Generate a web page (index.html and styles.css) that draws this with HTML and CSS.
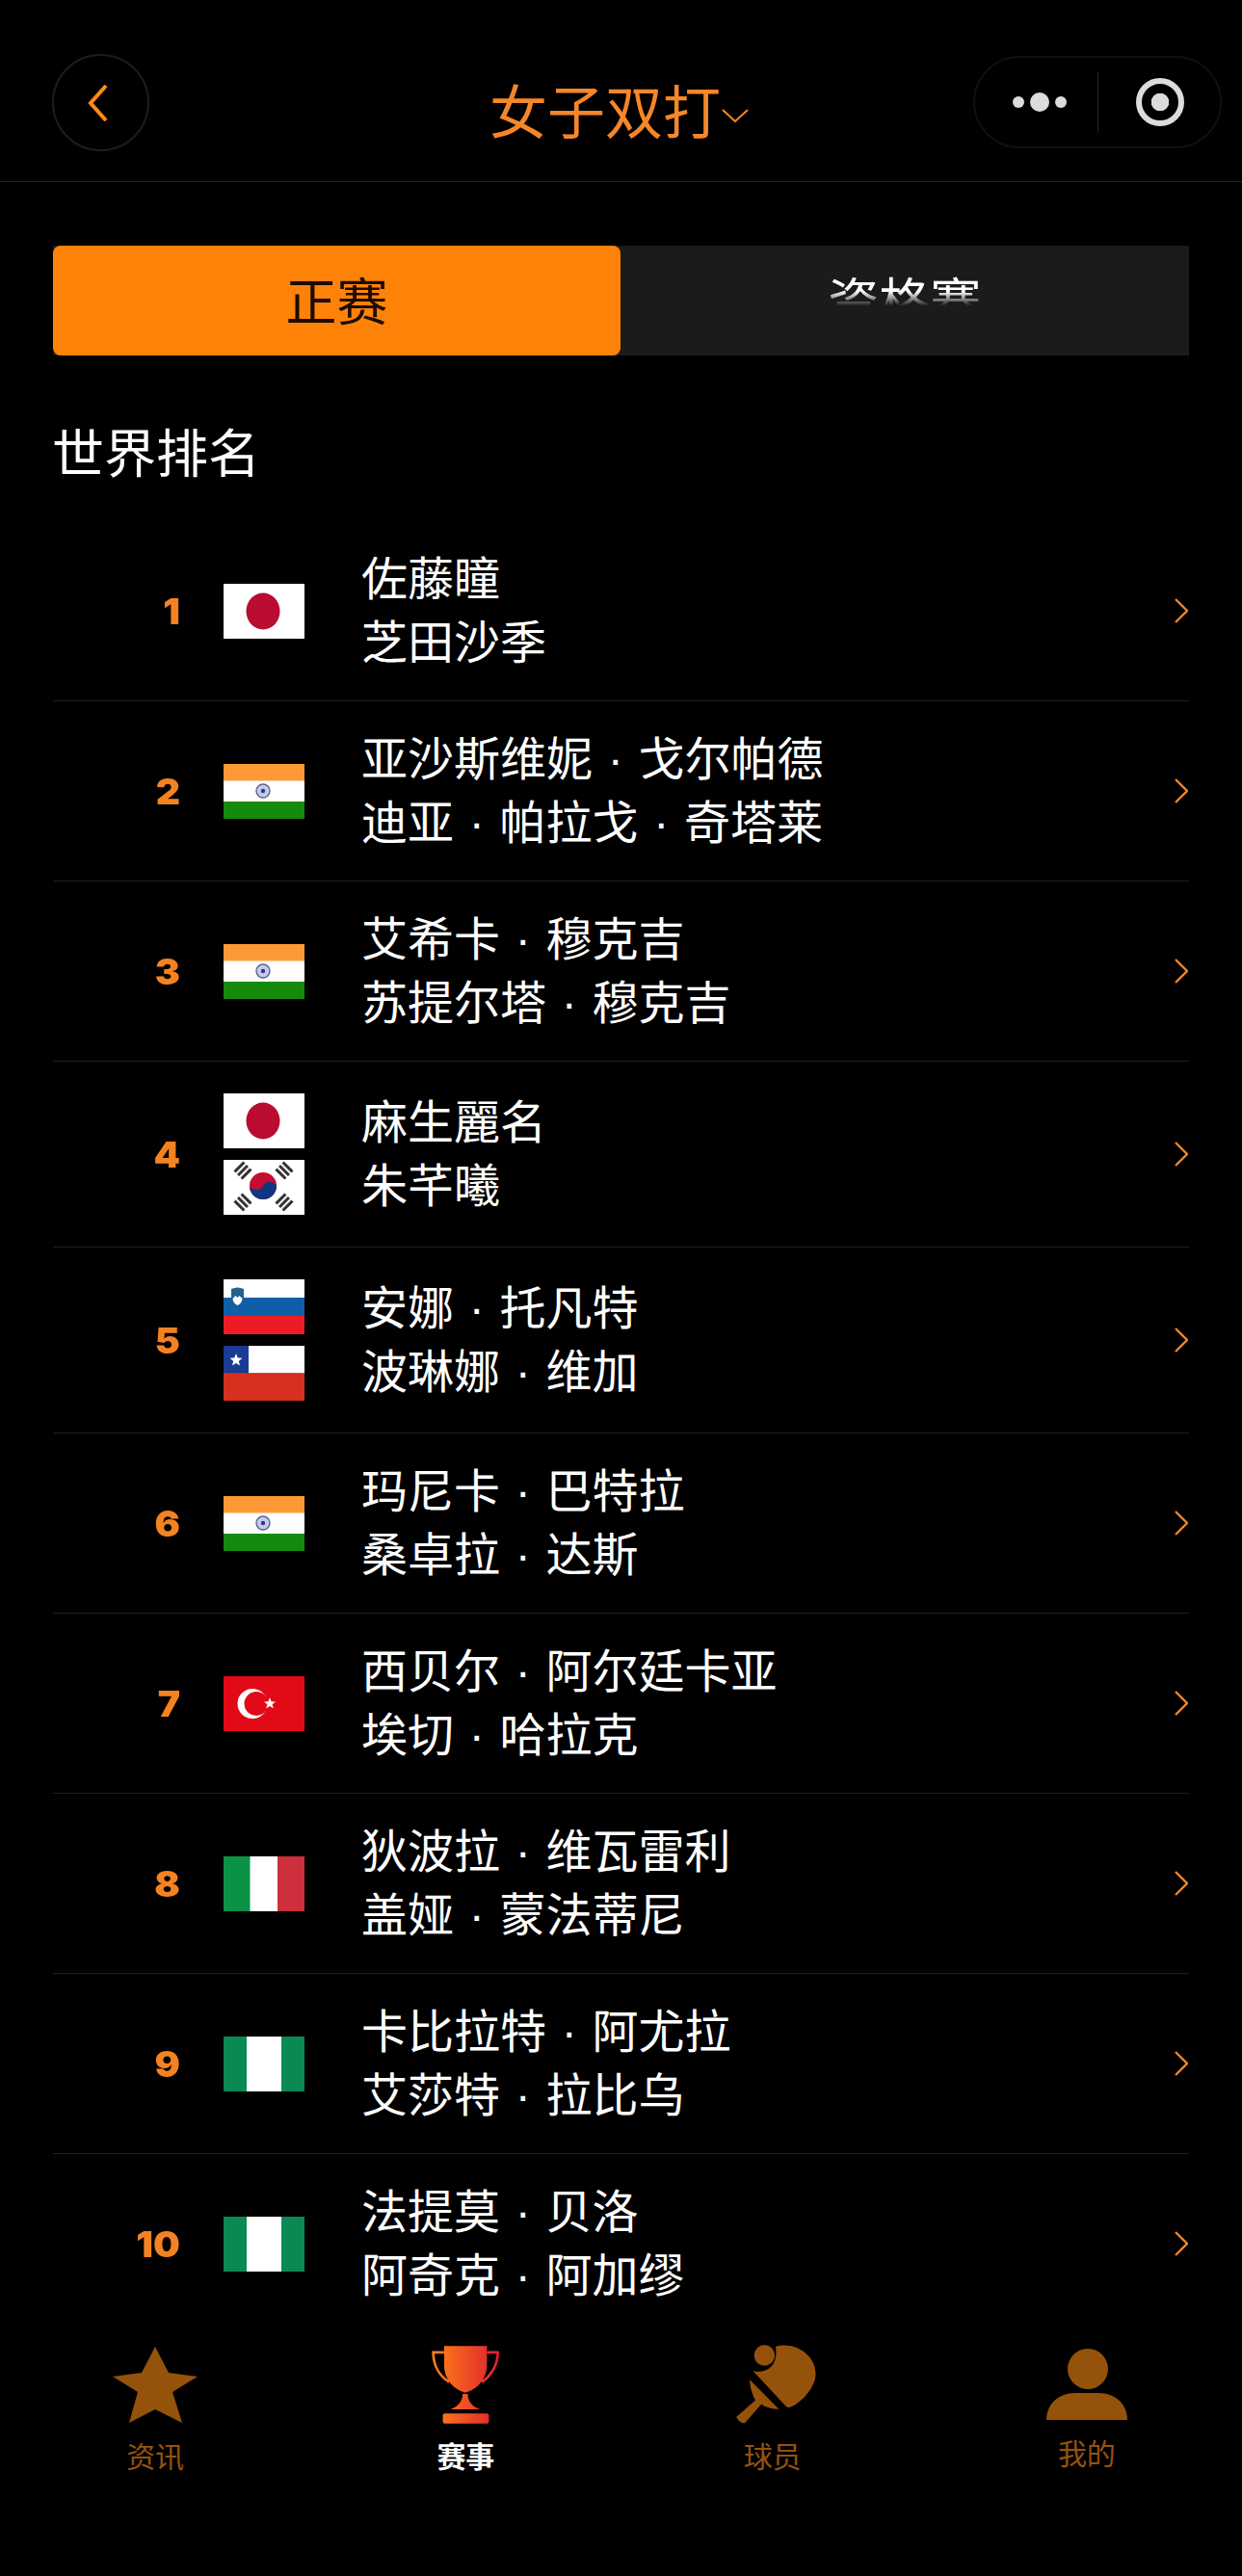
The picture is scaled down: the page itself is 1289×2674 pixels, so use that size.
FILE: index.html
```html
<!DOCTYPE html>
<html lang="zh-CN">
<head>
  <meta charset="UTF-8">
  <meta name="viewport" content="width=device-width, initial-scale=1.0">
  <title>女子双打</title>
  <link rel="stylesheet" href="styles.css">
</head>
<body>
  <svg class="sprite">
    <symbol id="flag-jp" viewBox="0 0 84 57">
      <rect width="84" height="57" fill="#fff"/>
      <ellipse cx="41" cy="28.5" rx="17.5" ry="19" fill="#b90c30"/>
    </symbol>
    <symbol id="flag-in" viewBox="0 0 84 57">
      <rect width="84" height="57" fill="#fff"/>
      <rect width="84" height="17.5" fill="#fd9a36"/>
      <rect y="39" width="84" height="18" fill="#168a0c"/>
      <circle cx="41" cy="28" r="7" fill="#c5cbe6" stroke="#5a648f" stroke-width="1.4"/>
      <circle cx="41" cy="28" r="2.2" fill="#2b3a92"/>
    </symbol>
    <symbol id="flag-kr" viewBox="0 0 84 57">
      <rect width="84" height="57" fill="#fff"/>
      <circle cx="41" cy="27" r="14" fill="#c60c30"/>
      <path d="M27 27a14 14 0 0 0 28 0a7 4 0 0 0-14 0a7 4 0 0 1-14 0z" fill="#10367f"/>
      <g fill="none" stroke="#333" stroke-width="3">
        <path transform="translate(20 11) rotate(-45)" d="M-7-5H7M-7 0H7M-7 5H7"/>
        <path transform="translate(63 11) rotate(45)" d="M-7-5H7M-7 0H7M-7 5H7"/>
        <path transform="translate(20 44) rotate(45)" d="M-7-5H7M-7 0H7M-7 5H7"/>
        <path transform="translate(63 44) rotate(-45)" d="M-7-5H7M-7 0H7M-7 5H7"/>
      </g>
    </symbol>
    <symbol id="flag-si" viewBox="0 0 84 57">
      <rect width="84" height="57" fill="#fff"/>
      <rect y="19" width="84" height="19" fill="#0f5fa8"/>
      <rect y="38" width="84" height="19" fill="#ed1c24"/>
      <path d="M8 10q6.500-3 13 0v9q0 6-6.500 9q-6.500-3-6.500-9z" fill="#23618f"/>
      <path d="M9.500 20l3-3 2 2 2-2 3 3q-0.500 5-5 7q-4.500-2-5-7z" fill="#fff"/>
    </symbol>
    <symbol id="flag-cl" viewBox="0 0 84 57">
      <rect width="84" height="28.500" fill="#fff"/>
      <rect y="28.500" width="84" height="28.500" fill="#d8301f"/>
      <rect width="26" height="28.500" fill="#1a3a94"/>
      <polygon points="13,8 14.800,12.500 19.500,12.800 15.800,15.900 17,20.500 13,18 9,20.500 10.200,15.900 6.500,12.800 11.200,12.500" fill="#fff"/>
    </symbol>
    <symbol id="flag-tr" viewBox="0 0 84 57">
      <rect width="84" height="57" fill="#e30a17"/>
      <circle cx="30" cy="28.500" r="15.500" fill="#fff"/>
      <circle cx="34" cy="28.500" r="12.500" fill="#e30a17"/>
      <polygon points="48,22 49.600,26.300 54,26.500 50.500,29.200 51.800,33.500 48,31 44.200,33.500 45.500,29.200 42,26.500 46.400,26.300" fill="#fff"/>
    </symbol>
    <symbol id="flag-it" viewBox="0 0 84 57">
      <rect width="84" height="57" fill="#fff"/>
      <rect width="27.500" height="57" fill="#0b9247"/>
      <rect x="56" width="28" height="57" fill="#cd2f3d"/>
    </symbol>
    <symbol id="flag-ng" viewBox="0 0 84 57">
      <rect width="84" height="57" fill="#0a8a52"/>
      <rect x="24" width="36" height="57" fill="#fff"/>
    </symbol>
    <symbol id="arrow" viewBox="0 0 14 26">
      <path d="M1 1l12 12L1 25" fill="none" stroke="#f0872a" stroke-width="2.400"/>
    </symbol>
  </svg>

  <header class="topbar">
    <div class="back-btn">
      <svg width="22" height="38" viewBox="0 0 22 38"><path d="M19 1L3 19l16 18" fill="none" stroke="#ff8c14" stroke-width="4"/></svg>
    </div>
    <div class="title">
      <span>女子双打</span>
      <svg class="title-arrow" width="28" height="14" viewBox="0 0 28 14"><path d="M1 1l13 12L27 1" fill="none" stroke="#f0872a" stroke-width="2"/></svg>
    </div>
    <div class="capsule">
      <div class="dots"><i></i><i class="big"></i><i></i></div>
      <div class="capsule-line"></div>
      <div class="ring"></div>
    </div>
  </header>

  <main class="content">
    <div class="tabs">
      <div class="tab tab-active">正赛</div>
      <div class="tab"><span class="tab-fade">资格赛</span></div>
    </div>

    <h2 class="section-title">世界排名</h2>

    <div class="rank-list">
      <div class="rank-row">
        <div class="rank-num">1</div>
        <div class="flags"><svg class="flag"><use href="#flag-jp"/></svg></div>
        <div class="names"><p>佐藤瞳</p><p>芝田沙季</p></div>
        <svg class="row-arrow"><use href="#arrow"/></svg>
      </div>
      <div class="rank-row">
        <div class="rank-num">2</div>
        <div class="flags"><svg class="flag"><use href="#flag-in"/></svg></div>
        <div class="names"><p>亚沙斯维妮 <span class="dot">·</span> 戈尔帕德</p><p>迪亚 <span class="dot">·</span> 帕拉戈 <span class="dot">·</span> 奇塔莱</p></div>
        <svg class="row-arrow"><use href="#arrow"/></svg>
      </div>
      <div class="rank-row">
        <div class="rank-num">3</div>
        <div class="flags"><svg class="flag"><use href="#flag-in"/></svg></div>
        <div class="names"><p>艾希卡 <span class="dot">·</span> 穆克吉</p><p>苏提尔塔 <span class="dot">·</span> 穆克吉</p></div>
        <svg class="row-arrow"><use href="#arrow"/></svg>
      </div>
      <div class="rank-row">
        <div class="rank-num">4</div>
        <div class="flags"><svg class="flag"><use href="#flag-jp"/></svg><svg class="flag"><use href="#flag-kr"/></svg></div>
        <div class="names"><p>麻生麗名</p><p>朱芊曦</p></div>
        <svg class="row-arrow"><use href="#arrow"/></svg>
      </div>
      <div class="rank-row">
        <div class="rank-num">5</div>
        <div class="flags"><svg class="flag"><use href="#flag-si"/></svg><svg class="flag"><use href="#flag-cl"/></svg></div>
        <div class="names"><p>安娜 <span class="dot">·</span> 托凡特</p><p>波琳娜 <span class="dot">·</span> 维加</p></div>
        <svg class="row-arrow"><use href="#arrow"/></svg>
      </div>
      <div class="rank-row">
        <div class="rank-num">6</div>
        <div class="flags"><svg class="flag"><use href="#flag-in"/></svg></div>
        <div class="names"><p>玛尼卡 <span class="dot">·</span> 巴特拉</p><p>桑卓拉 <span class="dot">·</span> 达斯</p></div>
        <svg class="row-arrow"><use href="#arrow"/></svg>
      </div>
      <div class="rank-row">
        <div class="rank-num">7</div>
        <div class="flags"><svg class="flag"><use href="#flag-tr"/></svg></div>
        <div class="names"><p>西贝尔 <span class="dot">·</span> 阿尔廷卡亚</p><p>埃切 <span class="dot">·</span> 哈拉克</p></div>
        <svg class="row-arrow"><use href="#arrow"/></svg>
      </div>
      <div class="rank-row">
        <div class="rank-num">8</div>
        <div class="flags"><svg class="flag"><use href="#flag-it"/></svg></div>
        <div class="names"><p>狄波拉 <span class="dot">·</span> 维瓦雷利</p><p>盖娅 <span class="dot">·</span> 蒙法蒂尼</p></div>
        <svg class="row-arrow"><use href="#arrow"/></svg>
      </div>
      <div class="rank-row">
        <div class="rank-num">9</div>
        <div class="flags"><svg class="flag"><use href="#flag-ng"/></svg></div>
        <div class="names"><p>卡比拉特 <span class="dot">·</span> 阿尤拉</p><p>艾莎特 <span class="dot">·</span> 拉比乌</p></div>
        <svg class="row-arrow"><use href="#arrow"/></svg>
      </div>
      <div class="rank-row">
        <div class="rank-num">10</div>
        <div class="flags"><svg class="flag"><use href="#flag-ng"/></svg></div>
        <div class="names"><p>法提莫 <span class="dot">·</span> 贝洛</p><p>阿奇克 <span class="dot">·</span> 阿加缪</p></div>
        <svg class="row-arrow"><use href="#arrow"/></svg>
      </div>
    </div>
  </main>

  <nav class="tabbar">
    <div class="nav-item">
      <div class="nav-icon">
        <svg width="88" height="79" viewBox="0 0 88 79"><polygon points="44,0 58,27 88,31 62,47 72,79 44,65 17,79 26,47 0,31 30,27" fill="#95520a"/></svg>
      </div>
      <span>资讯</span>
    </div>
    <div class="nav-item nav-active">
      <div class="nav-icon">
        <svg width="73" height="84" viewBox="50 36 220 252">
          <defs>
            <linearGradient id="cup" gradientUnits="userSpaceOnUse" x1="60" y1="0" x2="260" y2="0">
              <stop offset="0" stop-color="#ff8018"/>
              <stop offset="1" stop-color="#e0202f"/>
            </linearGradient>
          </defs>
          <path d="M92 42H226V100C226 150 190 180 158 188C126 180 92 150 92 100Z" fill="url(#cup)"/>
          <path d="M92 62H58C58 100 75 135 108 155M226 62H260C260 100 240 135 210 155" fill="none" stroke="url(#cup)" stroke-width="8"/>
          <path d="M150 192H166C166 215 180 232 205 240H112C135 232 150 215 150 192Z" fill="url(#cup)"/>
          <rect x="88" y="253" width="144" height="32" rx="6" fill="url(#cup)"/>
        </svg>
      </div>
      <span>赛事</span>
    </div>
    <div class="nav-item nav-player">
      <div class="nav-icon">
        <svg width="90" height="88" viewBox="60 30 270 265" fill="#95520a">
          <circle cx="160" cy="72" r="32"/>
          <path d="M195 44C255 28 320 70 320 130C320 175 270 225 238 235C232 235 228 232 224 228L124 120C165 132 205 105 195 44Z"/>
          <path d="M114 148L205 240C185 240 165 235 150 225L100 282C92 288 80 280 72 265L132 212C122 195 114 170 114 148Z"/>
        </svg>
      </div>
      <span>球员</span>
    </div>
    <div class="nav-item nav-mine">
      <div class="nav-icon">
        <svg width="84" height="74" viewBox="0 0 84 74" fill="#95520a">
          <ellipse cx="43" cy="21" rx="21" ry="21"/>
          <path d="M0 74C0 58 12 46 30 46H54C72 46 84 58 84 74Z"/>
        </svg>
      </div>
      <span>我的</span>
    </div>
  </nav>
</body>
</html>
```

FILE: styles.css
```css
* {
  box-sizing: border-box;
}

body {
  margin: 0;
  width: 1289px;
  height: 2674px;
  display: flex;
  flex-direction: column;
  overflow: hidden;
  background-color: #000;
  color: #fff;
  font-family: "Noto Sans CJK SC", "Noto Sans", sans-serif;
}

.sprite {
  display: none;
}

/* top bar */
.topbar {
  flex: none;
  height: 189px;
  padding: 0 21px 24px 54px;
  display: flex;
  align-items: flex-end;
  justify-content: space-between;
  border-bottom: 1px solid #232323;
}

.back-btn {
  width: 101px;
  height: 101px;
  margin-bottom: 7px;
  display: flex;
  align-items: center;
  justify-content: center;
  padding-right: 6px;
  border: 2px solid #1d1d1d;
  border-radius: 50%;
}

.title {
  display: flex;
  align-items: center;
  margin-right: -120px;
  margin-bottom: -3px;
  height: 108px;
  font-size: 60px;
  line-height: 108px;
  color: #f5862a;
}

.title-arrow {
  margin: 14px 0 0 1px;
}

.capsule {
  width: 258px;
  height: 96px;
  margin-bottom: 10px;
  display: flex;
  align-items: center;
  border: 2px solid #101010;
  border-radius: 48px;
}

.dots {
  width: 127px;
  display: flex;
  align-items: center;
  justify-content: center;
  gap: 6px;
  padding-left: 6px;
}

.dots i {
  width: 12px;
  height: 12px;
  border-radius: 50%;
  background-color: #dcdcdc;
}

.dots i.big {
  width: 20px;
  height: 20px;
}

.capsule-line {
  width: 1px;
  height: 64px;
  background-color: #242424;
}

.ring {
  width: 50px;
  height: 50px;
  margin-left: 39px;
  border: 6px solid #dcdcdc;
  border-radius: 50%;
  background: radial-gradient(circle, #dcdcdc 9px, transparent 9.500px);
}

/* content */
.content {
  flex: 1;
  min-height: 0;
  overflow: hidden;
  padding: 66px 55px 0;
}

.tabs {
  height: 114px;
  display: flex;
  background-color: #1b1b1b;
}

.tab {
  width: 50%;
  display: flex;
  align-items: center;
  justify-content: center;
  padding-bottom: 4px;
  font-size: 53px;
}

.tab-active {
  width: 589px;
  background-color: #ff8208;
  border-radius: 8px;
  color: #1c0b00;
}

.tab-fade {
  -webkit-mask-image: linear-gradient(to bottom, #000 40%, transparent 60%);
  mask-image: linear-gradient(to bottom, #000 40%, transparent 60%);
}

.section-title {
  margin: 63px 0 37px -1px;
  font-size: 54px;
  font-weight: 400;
  line-height: 72px;
}

.rank-row {
  min-height: 187px;
  display: flex;
  align-items: center;
  border-bottom: 1px solid #202020;
}

.rank-num {
  width: 132px;
  flex: none;
  text-align: right;
  font-family: Inter, "Liberation Sans", sans-serif;
  font-weight: 900;
  font-size: 37px;
  color: #f58220;
  transform: scaleX(1.06);
  transform-origin: right center;
}

.flags {
  flex: none;
  width: 84px;
  margin: 33px 59px 33px 45px;
  display: flex;
  flex-direction: column;
  gap: 12px;
}

.flag {
  display: block;
  width: 84px;
  height: 57px;
}

.names {
  flex: 1;
  padding-bottom: 8px;
  font-size: 48px;
  line-height: 66px;
  word-spacing: -11px;
}

.names p {
  margin: 0;
}

.dot {
  display: inline-block;
  width: 48px;
  line-height: 1;
  text-align: center;
  font-family: "Liberation Sans", sans-serif;
}

.row-arrow {
  flex: none;
  width: 14px;
  height: 26px;
  margin-right: 1px;
}

/* bottom tabs */
.tabbar {
  flex: none;
  height: 264px;
  padding-top: 23px;
  display: grid;
  grid-template-columns: repeat(4, 1fr);
  background-color: #000;
}

.nav-item {
  display: flex;
  flex-direction: column;
  align-items: center;
  font-size: 30px;
  line-height: 30px;
  color: #94520f;
}

.nav-icon {
  height: 84px;
  margin-bottom: 16px;
  display: flex;
  align-items: center;
  justify-content: center;
}

.nav-active {
  color: #fff;
  font-weight: 700;
}

.nav-player {
  padding-right: 8px;
}

.nav-player svg {
  margin-left: 7px;
}

.nav-mine span {
  margin-top: -3px;
}
```
